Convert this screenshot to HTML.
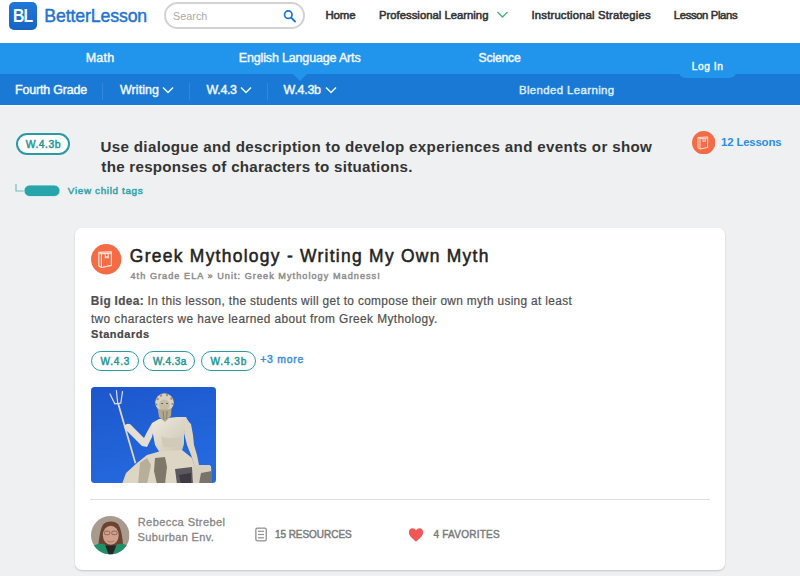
<!DOCTYPE html>
<html><head><meta charset="utf-8">
<style>
*{margin:0;padding:0;box-sizing:border-box}
html,body{width:800px;height:576px;overflow:hidden;background:#eff0f2;font-family:"Liberation Sans",sans-serif}
.a{position:absolute;white-space:nowrap;line-height:1}
#hdr{position:absolute;left:0;top:0;width:800px;height:43px;background:#fff}
#bar1{position:absolute;left:0;top:43px;width:800px;height:31px;background:#2194ec}
#bar2{position:absolute;left:0;top:74px;width:800px;height:31px;background:#1a79d5}
#bar2line{position:absolute;left:0;top:105px;width:800px;height:1px;background:#f6f8fb}
.logo{position:absolute;left:9px;top:2px;width:28px;height:28px;border-radius:5px;background:linear-gradient(#1f78d8,#1664c4)}
.b{font-weight:bold}
.nav{font-size:11.5px;font-weight:bold;color:#333}
.w1{font-size:12.5px;font-weight:bold;color:#eef7ff}
.w2{font-size:12.5px;font-weight:bold;color:#eef7ff}
.sep{position:absolute;top:83px;width:1px;height:17px;background:#3287dc}
.pill{position:absolute;border:1.6px solid #2a9aa2;border-radius:12px;background:#fff}
.teal{color:#26999f;font-weight:bold}
.card{position:absolute;left:75px;top:228px;width:650px;height:342px;background:#fff;border-radius:7px;box-shadow:0 1px 2px rgba(0,0,0,.18)}
</style></head><body>
<div id="hdr"></div>
<div class="logo"></div>
<div style="position:absolute;left:164px;top:2px;width:141px;height:27px;border:2px solid #d2d2d2;border-radius:14px;background:#fff"></div>
<svg style="position:absolute;left:280px;top:7px" width="20" height="20" viewBox="280 7 20 20"><circle cx="288.3" cy="14.7" r="3.75" fill="none" stroke="#1c74d2" stroke-width="1.7"/><line x1="291.2" y1="17.7" x2="295" y2="21.5" stroke="#1c74d2" stroke-width="1.9" stroke-linecap="round"/></svg>
<svg style="position:absolute;left:496px;top:10px" width="13" height="9" viewBox="0 0 13 9"><polyline points="1.5,2 6.5,7 11.5,2" fill="none" stroke="#4fae78" stroke-width="1.35"/></svg>

<div id="bar1"></div>
<div id="bar2"></div>
<div id="bar2line"></div>
<svg style="position:absolute;left:293px;top:74px" width="14" height="7" viewBox="0 0 14 7"><polygon points="0,0 14,0 7,7" fill="#2194ec"/></svg>
<div style="position:absolute;left:678px;top:70px;width:59px;height:8px;background:#2194ec;border-radius:0 0 9px 9px"></div>
<div class="sep" style="left:102px"></div>
<div class="sep" style="left:189px"></div>
<div class="sep" style="left:267px"></div>
<svg style="position:absolute;left:162px;top:86px" width="12" height="8" viewBox="0 0 12 8"><polyline points="1,1.5 6,6.5 11,1.5" fill="none" stroke="#eef7ff" stroke-width="1.5"/></svg>
<svg style="position:absolute;left:240px;top:86px" width="12" height="8" viewBox="0 0 12 8"><polyline points="1,1.5 6,6.5 11,1.5" fill="none" stroke="#eef7ff" stroke-width="1.5"/></svg>
<svg style="position:absolute;left:325px;top:86px" width="12" height="8" viewBox="0 0 12 8"><polyline points="1,1.5 6,6.5 11,1.5" fill="none" stroke="#eef7ff" stroke-width="1.5"/></svg>

<!-- standard header -->
<div class="pill" style="left:16px;top:133px;width:54px;height:22px;border-width:2px"></div>
<svg style="position:absolute;left:14px;top:183px" width="50" height="16" viewBox="0 0 50 16"><polyline points="2,1 2,8 10,8" fill="none" stroke="#7fb9bb" stroke-width="1.2"/><rect x="10" y="2" width="36" height="11.5" rx="5.75" fill="#27a5aa" stroke="#e8f7f7" stroke-width="0.8"/></svg>
<svg style="position:absolute;left:692px;top:130.5px" width="23.4" height="23.4" viewBox="0 0 31 31"><circle cx="15.5" cy="15.5" r="15.5" fill="#f36c46"/><g fill="none" stroke="#fde9dc" stroke-width="1.15" stroke-linejoin="round"><path d="M8 8.6 L20.8 7.9 L20.8 21.8 L10.6 23.9 L8 22.4 Z"/><path d="M8 8.6 L10.6 10 L20.8 9.4"/><path d="M10.6 10 L10.6 23.9"/><path d="M14.6 9.7 L14.6 14.3 L16.1 12.9 L17.6 14.3 L17.6 8.9"/></g></svg>

<!-- card -->
<div class="card"></div>
<svg style="position:absolute;left:91.2px;top:244.2px" width="30.4" height="30.4" viewBox="0 0 31 31"><circle cx="15.5" cy="15.5" r="15.5" fill="#f36c46"/><g fill="none" stroke="#fde9dc" stroke-width="1.15" stroke-linejoin="round"><path d="M8 8.6 L20.8 7.9 L20.8 21.8 L10.6 23.9 L8 22.4 Z"/><path d="M8 8.6 L10.6 10 L20.8 9.4"/><path d="M10.6 10 L10.6 23.9"/><path d="M14.6 9.7 L14.6 14.3 L16.1 12.9 L17.6 14.3 L17.6 8.9"/></g></svg>
<div class="pill" style="left:91px;top:350.5px;width:48px;height:20.5px"></div>
<div class="pill" style="left:143px;top:350.5px;width:52px;height:20.5px"></div>
<div class="pill" style="left:201px;top:350.5px;width:55px;height:20.5px"></div>
<svg style="position:absolute;left:91px;top:387px" width="125" height="96" viewBox="0 0 125 96">
<defs><linearGradient id="sky" x1="0" y1="0" x2="0.4" y2="1"><stop offset="0" stop-color="#1c56cc"/><stop offset="1" stop-color="#2569de"/></linearGradient>
<linearGradient id="stone" x1="0" y1="0" x2="1" y2="1"><stop offset="0" stop-color="#eeeadf"/><stop offset="1" stop-color="#c9c0ad"/></linearGradient>
<clipPath id="imc"><rect width="125" height="96" rx="3.5"/></clipPath></defs>
<g clip-path="url(#imc)">
<rect width="125" height="96" fill="url(#sky)"/>
<g fill="none" stroke="#e3ddcf" stroke-width="1.2" stroke-linecap="round">
<path d="M19 7 L23.8 16.8 L29.8 16.2 L31.5 4.5"/><path d="M25.4 3.5 L26.7 16.5"/>
</g>
<path d="M26.2 16.5 L28 16.3 L45.3 76 L43.6 76.4 Z" fill="#ddd6c4"/>
<path d="M33.5 39 C35 36 39 36 41 39 L47 45 L53 51 L56 45 L61 36 L64 38 L61 50 L56 60 L51 59 L44 52 L37 45 C34.5 43 33 41 33.5 39 Z" fill="#e4dfd2"/>
<path d="M61 36 L68 32 L86 30 L95 30 L100 39 L93 44 L93 57 L90 67 L69 66 L64 58 L62 47 Z" fill="url(#stone)"/>
<path d="M94 31 L100 37 L102 48 L103 58 L106 68 L108 78 L104 80 L100 68 L96 58 L93 46 Z" fill="#dcd5c4"/>
<path d="M70 49 C76 52 84 52 90 49 L89 60 L72 60 Z" fill="#d2cab8"/>
<circle cx="73.5" cy="15.5" r="9.3" fill="#d9d1be"/>
<g fill="#9b917b"><circle cx="66.5" cy="12" r="1.3"/><circle cx="70" cy="8.5" r="1.2"/><circle cx="76" cy="8" r="1.2"/><circle cx="80.5" cy="11.5" r="1.3"/><circle cx="81.5" cy="17" r="1.1"/><circle cx="65.5" cy="17.5" r="1.1"/></g>
<ellipse cx="73.3" cy="18" rx="5.2" ry="5.5" fill="#c7bca6"/>
<path d="M70 16.5 L72 16.5 M75 16.5 L77 16.5" stroke="#6d6454" stroke-width="1"/>
<path d="M66.5 21 C69 23 78 23 80.5 21 L80 29 L74 35 L68 30 Z" fill="#b2a78f"/>
<path d="M72 24 L73 33 M76 24 L75.5 32" stroke="#857b66" stroke-width="0.9"/>
<path d="M31 97 L35 86 L46 76 L56 68 L70 64 L91 63 L101 71 L104 80 L112 78 L120 79 L121 97 Z" fill="#ddd6c5"/>
<path d="M49 76 L56 71 L60 78 L56 97 L47 97 Z" fill="#b8ae9a"/>
<path d="M64 71 L74 70 L76 80 L74 97 L66 97 L63 84 Z" fill="#7f7868"/>
<path d="M84 82 L101 80 L102 97 L86 97 Z" fill="#5c5860"/><path d="M88 88 L100 86 L100 97 L90 97 Z" fill="#3d3a42"/>
<path d="M102 78 L119 78 L120 88 L118 97 L103 97 Z" fill="#d6cfbf"/>
<path d="M110 86 L121 84 L121 97 L108 97 Z" fill="#79736a"/>
</g>
</svg>
<div style="position:absolute;left:90px;top:499px;width:620px;height:1px;background:#dedede"></div>
<svg style="position:absolute;left:91px;top:516px" width="38.5" height="38.5" viewBox="0 0 38 38">
<defs><clipPath id="avc"><circle cx="19" cy="19" r="19"/></clipPath></defs>
<g clip-path="url(#avc)">
<rect width="38" height="38" fill="#a89b8e"/>
<path d="M7 34 C7.5 23 9 13 12 8.5 C15 4.5 24 4.5 27 8.5 C30 13 31.5 23 32 34 Z" fill="#6a4433"/>
<ellipse cx="19.5" cy="19" rx="7.8" ry="9.3" fill="#d1a08c"/>
<g fill="none" stroke="#6a4a40" stroke-width="0.8" opacity="0.8"><rect x="13.3" y="15" width="5.2" height="3.4" rx="1.2"/><rect x="20.5" y="15" width="5.2" height="3.4" rx="1.2"/></g>
<path d="M16 24.5 C18 26 21 26 23 24.5" stroke="#a06a5a" stroke-width="0.8" fill="none"/>
<path d="M-1 38 L0 31 C4 27.5 9 26.5 13 28 L19.5 33 L26 28 C30 26.5 35 27.5 38 31 L39 38 Z" fill="#20906a"/>
<path d="M14 29 L25 29 L21.5 38 L17.5 38 Z" fill="#262626"/>
</g></svg>
<svg style="position:absolute;left:254px;top:526px" width="14" height="17" viewBox="254 526 14 17"><rect x="255.85" y="528.05" width="10.4" height="12.9" rx="1.6" fill="none" stroke="#8f8f8f" stroke-width="1.3"/><g stroke="#8f8f8f" stroke-width="1.2"><line x1="258" y1="531.3" x2="264" y2="531.3"/><line x1="258" y1="534.5" x2="264" y2="534.5"/><line x1="258" y1="537.8" x2="264" y2="537.8"/></g></svg>
<svg style="position:absolute;left:408px;top:527px" width="16" height="16" viewBox="408 527 16 16"><path d="M416 541.6 C413 539 408.9 536 408.9 532.2 C408.9 529.8 410.5 528.25 412.4 528.25 C414 528.25 415.3 529.2 416 530.4 C416.7 529.2 418 528.25 419.6 528.25 C421.5 528.25 423.1 529.8 423.1 532.2 C423.1 536 419 539 416 541.6 Z" fill="#f25657"/></svg>
<div class="a" id="bl" style="left:13.45px;top:7.47px;font-size:18.50px;letter-spacing:-0.971px;transform:scaleX(0.850);transform-origin:0 0;font-weight:bold;color:#fff;">BL</div>
<div class="a" id="brand" style="left:44.26px;top:7.69px;font-size:17.71px;letter-spacing:-0.115px;font-weight:normal;color:#1f74d0;-webkit-text-stroke:0.45px #1f74d0;">BetterLesson</div>
<div class="a" id="search" style="left:172.92px;top:10.55px;font-size:10.79px;letter-spacing:0.054px;font-weight:normal;color:#a9a9a9;">Search</div>
<div class="a" id="home" style="left:325.38px;top:9.63px;font-size:11.43px;letter-spacing:-0.068px;font-weight:normal;color:#333;-webkit-text-stroke:0.55px #333;">Home</div>
<div class="a" id="prof" style="left:379.03px;top:9.51px;font-size:11.29px;letter-spacing:0.015px;font-weight:normal;color:#333;-webkit-text-stroke:0.55px #333;">Professional Learning</div>
<div class="a" id="instr" style="left:531.56px;top:9.71px;font-size:11.29px;letter-spacing:0.185px;font-weight:normal;color:#333;-webkit-text-stroke:0.55px #333;">Instructional Strategies</div>
<div class="a" id="plans" style="left:673.82px;top:9.98px;font-size:11.29px;letter-spacing:-0.365px;font-weight:normal;color:#333;-webkit-text-stroke:0.55px #333;">Lesson Plans</div>
<div class="a" id="math" style="left:85.68px;top:52.41px;font-size:12.50px;letter-spacing:0.221px;font-weight:normal;color:#eef7ff;-webkit-text-stroke:0.45px #eef7ff;">Math</div>
<div class="a" id="ela" style="left:238.85px;top:51.72px;font-size:12.50px;letter-spacing:-0.165px;font-weight:normal;color:#eef7ff;-webkit-text-stroke:0.45px #eef7ff;">English Language Arts</div>
<div class="a" id="sci" style="left:478.62px;top:52.45px;font-size:12.14px;letter-spacing:-0.180px;font-weight:normal;color:#eef7ff;-webkit-text-stroke:0.45px #eef7ff;">Science</div>
<div class="a" id="login" style="left:691.85px;top:62.17px;font-size:10.20px;letter-spacing:0.525px;font-weight:normal;color:#eef7ff;-webkit-text-stroke:0.45px #eef7ff;">Log In</div>
<div class="a" id="fourth" style="left:15.02px;top:83.71px;font-size:12.43px;letter-spacing:-0.153px;font-weight:normal;color:#eef7ff;-webkit-text-stroke:0.45px #eef7ff;">Fourth Grade</div>
<div class="a" id="writing" style="left:120.02px;top:83.58px;font-size:12.43px;letter-spacing:0.072px;font-weight:normal;color:#eef7ff;-webkit-text-stroke:0.45px #eef7ff;">Writing</div>
<div class="a" id="w43n" style="left:206.61px;top:83.50px;font-size:12.43px;letter-spacing:-0.352px;font-weight:normal;color:#eef7ff;-webkit-text-stroke:0.45px #eef7ff;">W.4.3</div>
<div class="a" id="w43bn" style="left:283.61px;top:83.53px;font-size:12.43px;letter-spacing:-0.251px;font-weight:normal;color:#eef7ff;-webkit-text-stroke:0.45px #eef7ff;">W.4.3b</div>
<div class="a" id="blend" style="left:518.91px;top:85.28px;font-size:11.43px;letter-spacing:0.381px;font-weight:normal;color:#d9ecff;-webkit-text-stroke:0.45px #d9ecff;">Blended Learning</div>
<div class="a" id="tagp" style="left:25.70px;top:139.95px;font-size:10.40px;letter-spacing:0.502px;font-weight:normal;color:#219696;-webkit-text-stroke:0.45px #219696;">W.4.3b</div>
<div class="a" id="h1" style="left:100.46px;top:138.78px;font-size:15.14px;letter-spacing:0.342px;font-weight:bold;color:#333;">Use dialogue and description to develop experiences and events or show</div>
<div class="a" id="h2" style="left:101.36px;top:159.13px;font-size:15.14px;letter-spacing:0.267px;font-weight:bold;color:#333;">the responses of characters to situations.</div>
<div class="a" id="vct" style="left:67.86px;top:185.62px;font-size:9.90px;letter-spacing:0.652px;font-weight:normal;color:#2aa3a8;-webkit-text-stroke:0.45px #2aa3a8;">View child tags</div>
<div class="a" id="less" style="left:721.11px;top:136.51px;font-size:11.43px;letter-spacing:-0.200px;font-weight:bold;color:#2a8ee0;">12 Lessons</div>
<div class="a" id="title" style="left:129.87px;top:248.34px;font-size:17.43px;letter-spacing:1.282px;font-weight:normal;color:#222;-webkit-text-stroke:0.5px #222;">Greek Mythology - Writing My Own Myth</div>
<div class="a" id="sub" style="left:130.50px;top:272.47px;font-size:9.14px;letter-spacing:1.042px;font-weight:normal;color:#8d8d8d;-webkit-text-stroke:0.45px #8d8d8d;">4th Grade ELA &raquo; Unit: Greek Mythology Madness!</div>
<div class="a" id="bi1" style="left:90.87px;top:295.54px;font-size:11.86px;letter-spacing:0.337px;font-weight:normal;color:#505050;-webkit-text-stroke:0.2px #505050;"><b>Big Idea:</b> In this lesson, the students will get to compose their own myth using at least</div>
<div class="a" id="bi2" style="left:90.89px;top:314.05px;font-size:11.86px;letter-spacing:0.416px;font-weight:normal;color:#505050;-webkit-text-stroke:0.2px #505050;">two characters we have learned about from Greek Mythology.</div>
<div class="a" id="std" style="left:91.09px;top:328.50px;font-size:11.00px;letter-spacing:0.537px;font-weight:bold;color:#454545;-webkit-text-stroke:0.2px #454545;">Standards</div>
<div class="a" id="p1" style="left:100.62px;top:356.87px;font-size:10.00px;letter-spacing:0.773px;font-weight:normal;color:#219696;-webkit-text-stroke:0.45px #219696;">W.4.3</div>
<div class="a" id="p2" style="left:152.99px;top:356.98px;font-size:10.00px;letter-spacing:0.416px;font-weight:normal;color:#219696;-webkit-text-stroke:0.45px #219696;">W.4.3a</div>
<div class="a" id="p3" style="left:210.49px;top:356.87px;font-size:10.00px;letter-spacing:0.929px;font-weight:normal;color:#219696;-webkit-text-stroke:0.45px #219696;">W.4.3b</div>
<div class="a" id="more" style="left:260.27px;top:354.78px;font-size:10.40px;letter-spacing:0.750px;font-weight:normal;color:#3a8ee0;-webkit-text-stroke:0.45px #3a8ee0;">+3 more</div>
<div class="a" id="name" style="left:137.74px;top:517.37px;font-size:11.07px;letter-spacing:0.395px;font-weight:normal;color:#858585;-webkit-text-stroke:0.3px #858585;">Rebecca Strebel</div>
<div class="a" id="org" style="left:137.47px;top:531.56px;font-size:11.07px;letter-spacing:0.340px;font-weight:normal;color:#858585;-webkit-text-stroke:0.3px #858585;">Suburban Env.</div>
<div class="a" id="res" style="left:274.89px;top:529.80px;font-size:10.00px;letter-spacing:-0.037px;font-weight:normal;color:#7b7b7b;-webkit-text-stroke:0.45px #7b7b7b;">15 RESOURCES</div>
<div class="a" id="fav" style="left:433.49px;top:529.56px;font-size:10.00px;letter-spacing:0.244px;font-weight:normal;color:#7b7b7b;-webkit-text-stroke:0.45px #7b7b7b;">4 FAVORITES</div>
</body></html>
